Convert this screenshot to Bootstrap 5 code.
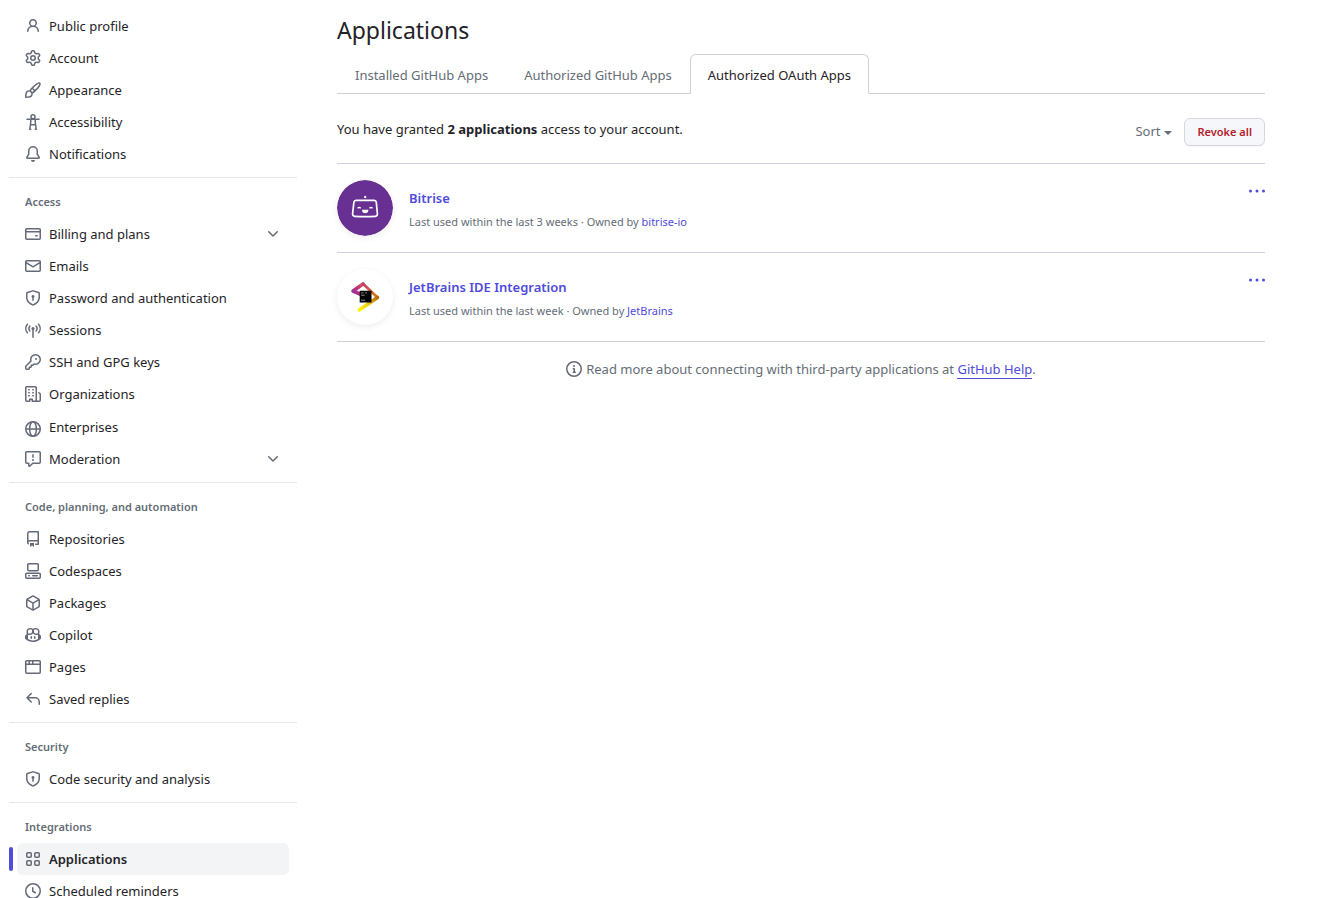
<!DOCTYPE html>
<html lang="en">
<head>
<meta charset="utf-8">
<meta name="viewport" content="width=device-width, initial-scale=1">
<title>Applications</title>
<link href="https://cdn.jsdelivr.net/npm/bootstrap@5.3.0/dist/css/bootstrap.min.css" rel="stylesheet">
<style>
  :root { --ink: #1f2328; --muted: #656d76; --line: #d0d1dc; --line-soft: #e6e7ee; --accent: #4f4bdb; }
  body { font-family: "Noto Sans", "Open Sans", sans-serif; font-size: 13px; line-height: 20px; color: var(--ink); background: #fff; overflow-x: hidden; }
  .settings { height: 100vh; overflow: hidden; }
  .sidebar { width: 288px; margin-left: 9px; padding-top: 10px; }
  .sidebar a { height: 32px; margin: 0 8px; padding: 0 8px; gap: 8px; border-radius: 6px; color: var(--ink); text-decoration: none; position: relative; }
  .sidebar a.tall { height: 33px; }
  .sidebar a:hover, .sidebar a.active { background: #f3f4f6; }
  .sidebar a.active { font-weight: 600; }
  .sidebar a.active::before { content: ""; position: absolute; left: -8px; top: 4px; width: 4px; height: 24px; border-radius: 6px; background: var(--accent); }
  .sidebar section { border-top: 1px solid var(--line-soft); margin-top: 7px; }
  .sidebar h2 { margin: 0; padding: 16px 16px 8px; font-size: 11px; line-height: 16px; font-weight: 600; color: var(--muted); }
  .oct { width: 16px; height: 16px; flex: none; fill: #656a78; }
  .oct.lined, .oct .lined { fill: none; stroke: #656a78; stroke-width: 1.5; stroke-linecap: round; stroke-linejoin: round; }
  main { min-width: 0; padding: 14px 55px 0 40px; }
  h1 { font-size: 23px; line-height: 32px; margin: 0 0 8px; font-weight: 400; }
  .nav-tabs { --bs-nav-tabs-border-color: var(--line); --bs-nav-tabs-link-active-border-color: var(--line) var(--line) #fff; --bs-nav-tabs-link-active-color: var(--ink); --bs-nav-link-color: var(--muted); }
  .nav-tabs .nav-link { padding: 10px 17px 8px; line-height: 20px; }
  .summary { padding: 24px 0 17px; line-height: 22px; border-bottom: 1px solid var(--line); }
  .sort-toggle { color: var(--muted); font-size: 13px; line-height: 20px; border: 0; background: none; padding: 0 0 2px; }
  .sort-toggle::after { content: ""; display: inline-block; vertical-align: middle; margin-left: 4px; border: 4px solid transparent; border-top-color: currentColor; border-bottom-width: 0; }
  .revoke { font-size: 11px; font-weight: 600; line-height: 18px; padding: 4px 12px; color: #b3202c; background: #f6f7fb; border: 1px solid #d5d7de; border-radius: 6px; box-shadow: 0 1px 0 rgba(31,35,40,.04); }
  .app { padding: 16px 0; border-bottom: 1px solid var(--line); gap: 16px; }
  .logo { width: 56px; height: 56px; border-radius: 50%; box-shadow: 0 2px 6px rgba(30,30,60,.08); }
  .app a, .help a { color: var(--accent); text-decoration: none; }
  .app-title { font-weight: 600; line-height: 20px; margin-top: 8px; }
  .owner { font-size: 11px; line-height: 18px; margin: 5px 0 0; color: var(--muted); }
  .more { border: 0; background: none; padding: 3px 0; line-height: 0; align-self: flex-start; }
  .more svg { fill: var(--accent); }
  .help { color: var(--muted); padding-top: 17px; gap: 4px; }
  .help a { border-bottom: 1px solid var(--accent); }
</style>
</head>
<body>
<div class="settings d-flex">
  <nav class="sidebar flex-shrink-0" aria-label="Settings">
    <a href="#" class="d-flex align-items-center"><svg class="oct" viewBox="0 0 16 16"><path d="M10.561 8.073a6.005 6.005 0 0 1 3.432 5.142.75.75 0 1 1-1.498.07 4.5 4.5 0 0 0-8.99 0 .75.75 0 0 1-1.498-.07 6.004 6.004 0 0 1 3.431-5.142 3.999 3.999 0 1 1 5.123 0ZM10.5 5a2.5 2.5 0 1 0-5 0 2.5 2.5 0 0 0 5 0Z"/></svg>Public profile</a>
    <a href="#" class="d-flex align-items-center"><svg class="oct" viewBox="0 0 16 16"><path d="M8 0a8.2 8.2 0 0 1 .701.031C9.444.095 9.99.645 10.16 1.29l.288 1.107c.018.066.079.158.212.224.231.114.454.243.668.386.123.082.233.09.299.071l1.103-.303c.644-.176 1.392.021 1.82.63.27.385.506.792.704 1.218.315.675.111 1.422-.364 1.891l-.814.806c-.049.048-.098.147-.088.294.016.257.016.515 0 .772-.01.147.038.246.088.294l.814.806c.475.469.679 1.216.364 1.891a7.977 7.977 0 0 1-.704 1.217c-.428.61-1.176.807-1.82.63l-1.102-.302c-.067-.019-.177-.011-.3.071a5.909 5.909 0 0 1-.668.386c-.133.066-.194.158-.211.224l-.29 1.106c-.168.646-.715 1.196-1.458 1.26a8.006 8.006 0 0 1-1.402 0c-.743-.064-1.289-.614-1.458-1.26l-.289-1.106c-.018-.066-.079-.158-.212-.224a5.738 5.738 0 0 1-.668-.386c-.123-.082-.233-.09-.299-.071l-1.103.303c-.644.176-1.392-.021-1.82-.63a8.12 8.12 0 0 1-.704-1.218c-.315-.675-.111-1.422.363-1.891l.815-.806c.05-.048.098-.147.088-.294a6.214 6.214 0 0 1 0-.772c.01-.147-.038-.246-.088-.294l-.815-.806C.635 6.045.431 5.298.746 4.623a7.92 7.92 0 0 1 .704-1.217c.428-.61 1.176-.807 1.82-.63l1.102.302c.067.019.177.011.3-.071.214-.143.437-.272.668-.386.133-.066.194-.158.211-.224l.29-1.106C6.009.645 6.556.095 7.299.03 7.53.01 7.764 0 8 0Zm-.571 1.525c-.036.003-.108.036-.137.146l-.289 1.105c-.147.561-.549.967-.998 1.189-.173.086-.34.183-.5.29-.417.278-.97.423-1.529.27l-1.103-.303c-.109-.03-.175.016-.195.045-.22.312-.412.644-.573.99-.014.031-.021.11.059.19l.815.806c.411.406.562.957.53 1.456a4.709 4.709 0 0 0 0 .582c.032.499-.119 1.05-.53 1.456l-.815.806c-.081.08-.073.159-.059.19.162.346.353.677.573.989.02.03.085.076.195.046l1.102-.303c.56-.153 1.113-.008 1.53.27.161.107.328.204.501.29.447.222.85.629.997 1.189l.289 1.105c.029.109.101.143.137.146a6.6 6.6 0 0 0 1.142 0c.036-.003.108-.036.137-.146l.289-1.105c.147-.561.549-.967.998-1.189.173-.086.34-.183.5-.29.417-.278.97-.423 1.529-.27l1.103.303c.109.029.175-.016.195-.045.22-.313.411-.644.573-.99.014-.031.021-.11-.059-.19l-.815-.806c-.411-.406-.562-.957-.53-1.456a4.709 4.709 0 0 0 0-.582c-.032-.499.119-1.05.53-1.456l.815-.806c.081-.08.073-.159.059-.19a6.464 6.464 0 0 0-.573-.989c-.02-.03-.085-.076-.195-.046l-1.102.303c-.56.153-1.113.008-1.53-.27a4.44 4.44 0 0 0-.501-.29c-.447-.222-.85-.629-.997-1.189l-.289-1.105c-.029-.11-.101-.143-.137-.146a6.6 6.6 0 0 0-1.142 0ZM11 8a3 3 0 1 1-6 0 3 3 0 0 1 6 0ZM9.5 8a1.5 1.5 0 1 0-3.001.001A1.5 1.5 0 0 0 9.5 8Z"/></svg>Account</a>
    <a href="#" class="d-flex align-items-center"><svg class="oct" viewBox="0 0 16 16"><path d="M11.134 1.535c.7-.509 1.416-.942 2.076-1.155.649-.21 1.463-.267 2.069.34.603.601.568 1.411.368 2.07-.202.668-.624 1.39-1.125 2.096-1.011 1.424-2.496 2.987-3.775 4.249-1.098 1.084-2.132 1.839-3.04 2.3a3.744 3.744 0 0 1-1.055 3.217c-.431.431-1.065.691-1.657.861-.614.177-1.294.287-1.914.357A21.151 21.151 0 0 1 .797 16H.743l.007-.75H.749L.742 16a.75.75 0 0 1-.743-.742l.743-.008-.742.007v-.054a21.25 21.25 0 0 1 .13-2.284c.067-.647.187-1.287.358-1.914.17-.591.43-1.226.86-1.657a3.746 3.746 0 0 1 3.227-1.054c.466-.893 1.225-1.907 2.314-2.982 1.271-1.255 2.833-2.75 4.245-3.777ZM1.62 13.089c-.051.464-.086.929-.104 1.395.466-.018.932-.053 1.396-.104a10.511 10.511 0 0 0 1.668-.309c.526-.151.856-.325 1.011-.48a2.25 2.25 0 1 0-3.182-3.182c-.155.155-.329.485-.48 1.01a10.515 10.515 0 0 0-.309 1.67Zm10.396-10.34c-1.224.89-2.605 2.189-3.822 3.384l1.718 1.718c1.21-1.205 2.51-2.597 3.387-3.833.47-.662.78-1.227.912-1.662.134-.444.032-.551.009-.575h-.001V1.78c-.014-.014-.113-.113-.548.027-.432.14-.995.462-1.655.942Zm-4.832 7.266-.001.001a9.859 9.859 0 0 0 1.63-1.142L7.155 7.216a9.7 9.7 0 0 0-1.161 1.607c.482.302.889.71 1.19 1.192Z"/></svg>Appearance</a>
    <a href="#" class="d-flex align-items-center"><svg class="oct lined" viewBox="0 0 16 16"><circle cx="8" cy="2.75" r="2"/><path d="M2 5.25h12M5.75 5.5v3L4.75 15.25M10.25 5.5v3l1 6.75M6 10.75h4M4.75 15.25h1M10.25 15.25h1"/></svg>Accessibility</a>
    <a href="#" class="d-flex align-items-center"><svg class="oct" viewBox="0 0 16 16"><path d="M8 16a2 2 0 0 0 1.985-1.75c.017-.137-.097-.25-.235-.25h-3.5c-.138 0-.252.113-.235.25A2 2 0 0 0 8 16ZM3 5a5 5 0 0 1 10 0v2.947c0 .05.015.098.042.139l1.703 2.555A1.519 1.519 0 0 1 13.482 13H2.518a1.516 1.516 0 0 1-1.263-2.36l1.703-2.554A.255.255 0 0 0 3 7.947Zm5-3.5A3.5 3.5 0 0 0 4.5 5v2.947c0 .346-.102.683-.294.97l-1.703 2.556a.017.017 0 0 0-.003.01l.001.006c0 .002.002.004.004.006l.006.004.007.001h10.964l.007-.001.006-.004.004-.006.001-.007a.017.017 0 0 0-.003-.01l-1.703-2.554a1.745 1.745 0 0 1-.294-.97V5A3.5 3.5 0 0 0 8 1.5Z"/></svg>Notifications</a>

    <section>
      <h2>Access</h2>
      <a href="#" class="d-flex align-items-center"><svg class="oct" viewBox="0 0 16 16"><path d="M10.75 9a.75.75 0 0 0 0 1.5h1.5a.75.75 0 0 0 0-1.5h-1.5Z"/><path d="M0 3.75C0 2.784.784 2 1.75 2h12.5c.966 0 1.75.784 1.75 1.75v8.5A1.75 1.75 0 0 1 14.25 14H1.75A1.75 1.75 0 0 1 0 12.25ZM14.5 6.5h-13v5.75c0 .138.112.25.25.25h12.5a.25.25 0 0 0 .25-.25Zm0-2.75a.25.25 0 0 0-.25-.25H1.75a.25.25 0 0 0-.25.25V5h13Z"/></svg>Billing and plans<svg class="oct ms-auto" viewBox="0 0 16 16"><path id="chevron" d="M12.78 5.22a.749.749 0 0 1 0 1.06l-4.25 4.25a.749.749 0 0 1-1.06 0L3.22 6.28a.749.749 0 1 1 1.06-1.06L8 8.939l3.72-3.719a.749.749 0 0 1 1.06 0Z"/></svg></a>
      <a href="#" class="d-flex align-items-center"><svg class="oct" viewBox="0 0 16 16"><path d="M1.75 2h12.5c.966 0 1.75.784 1.75 1.75v8.5A1.75 1.75 0 0 1 14.25 14H1.75A1.75 1.75 0 0 1 0 12.25v-8.5C0 2.784.784 2 1.75 2ZM1.5 12.251c0 .138.112.25.25.25h12.5a.25.25 0 0 0 .25-.25V5.809L8.38 9.397a.75.75 0 0 1-.76 0L1.5 5.809v6.442Zm13-8.181v-.32a.25.25 0 0 0-.25-.25H1.75a.25.25 0 0 0-.25.25v.32L8 7.88Z"/></svg>Emails</a>
      <a href="#" class="d-flex align-items-center"><svg class="oct" viewBox="0 0 16 16"><path id="shield" d="m8.533.133 5.25 1.68A1.75 1.75 0 0 1 15 3.48V7c0 1.566-.32 3.182-1.303 4.682-.983 1.498-2.585 2.813-5.032 3.855a1.697 1.697 0 0 1-1.33 0c-2.447-1.042-4.049-2.357-5.032-3.855C1.32 10.182 1 8.566 1 7V3.48a1.755 1.755 0 0 1 1.217-1.667l5.25-1.68a1.748 1.748 0 0 1 1.066 0Zm-.61 1.429.001.001-5.25 1.68a.251.251 0 0 0-.174.237V7c0 1.36.275 2.666 1.057 3.859.784 1.194 2.121 2.342 4.366 3.298a.196.196 0 0 0 .154 0c2.245-.957 3.582-2.103 4.366-3.297C13.225 9.666 13.5 8.358 13.5 7V3.48a.25.25 0 0 0-.174-.238l-5.25-1.68a.25.25 0 0 0-.153 0ZM9.5 6.5c0 .536-.286 1.032-.75 1.3v2.45a.75.75 0 0 1-1.5 0V7.8A1.5 1.5 0 1 1 9.5 6.5Z"/></svg>Password and authentication</a>
      <a href="#" class="d-flex align-items-center"><svg class="oct" viewBox="0 0 16 16"><path class="lined" d="M2.4 2.2a6.7 6.7 0 0 0 0 8.6M13.6 2.2a6.7 6.7 0 0 1 0 8.6M4.9 4.1a3.7 3.7 0 0 0 0 4.8M11.1 4.1a3.7 3.7 0 0 1 0 4.8M8 7v8.2"/><circle cx="8" cy="6.5" r="1.6"/></svg>Sessions</a>
      <a href="#" class="d-flex align-items-center"><svg class="oct" viewBox="0 0 16 16"><path d="M10.5 0a5.499 5.499 0 1 1-1.288 10.848l-.932.932a.749.749 0 0 1-.53.22H7v.75a.749.749 0 0 1-.22.53l-.5.5a.749.749 0 0 1-.53.22H5v.75a.749.749 0 0 1-.22.53l-.5.5a.749.749 0 0 1-.53.22h-2A1.75 1.75 0 0 1 0 14.25v-2c0-.199.079-.389.22-.53l4.932-4.932A5.5 5.5 0 0 1 10.5 0Zm-4 5.5c-.001.431.069.86.205 1.269a.75.75 0 0 1-.181.768L1.5 12.56v1.69c0 .138.112.25.25.25h1.69l.06-.06v-1.19a.75.75 0 0 1 .75-.75h1.19l.06-.06v-1.19a.75.75 0 0 1 .75-.75h1.19l1.023-1.025a.75.75 0 0 1 .768-.18A4 4 0 1 0 6.5 5.5ZM11 6a1 1 0 1 1 0-2 1 1 0 0 1 0 2Z"/></svg>SSH and GPG keys</a>
      <a href="#" class="d-flex align-items-center"><svg class="oct" viewBox="0 0 16 16"><path d="M1.75 16A1.75 1.75 0 0 1 0 14.25V1.75C0 .784.784 0 1.75 0h8.5C11.216 0 12 .784 12 1.75v12.5c0 .085-.006.168-.018.25h2.268a.25.25 0 0 0 .25-.25V8.285a.25.25 0 0 0-.111-.208l-1.055-.703a.749.749 0 1 1 .832-1.248l1.055.703c.487.325.779.871.779 1.456v5.965A1.75 1.75 0 0 1 14.25 16h-3.5a.766.766 0 0 1-.197-.026c-.099.017-.2.026-.303.026h-3a.75.75 0 0 1-.75-.75V14h-1v1.25a.75.75 0 0 1-.75.75Zm-.25-1.75c0 .138.112.25.25.25H4v-1.25a.75.75 0 0 1 .75-.75h2.5a.75.75 0 0 1 .75.75v1.25h2.25a.25.25 0 0 0 .25-.25V1.75a.25.25 0 0 0-.25-.25h-8.5a.25.25 0 0 0-.25.25ZM3.75 6h.5a.75.75 0 0 1 0 1.5h-.5a.75.75 0 0 1 0-1.5ZM3 3.75A.75.75 0 0 1 3.75 3h.5a.75.75 0 0 1 0 1.5h-.5A.75.75 0 0 1 3 3.75Zm4 3A.75.75 0 0 1 7.75 6h.5a.75.75 0 0 1 0 1.5h-.5A.75.75 0 0 1 7 6.75ZM7.75 3h.5a.75.75 0 0 1 0 1.5h-.5a.75.75 0 0 1 0-1.5ZM3 9.75A.75.75 0 0 1 3.75 9h.5a.75.75 0 0 1 0 1.5h-.5A.75.75 0 0 1 3 9.75ZM7.75 9h.5a.75.75 0 0 1 0 1.5h-.5a.75.75 0 0 1 0-1.5Z"/></svg>Organizations</a>
      <a href="#" class="d-flex align-items-center tall"><svg class="oct lined mt-1" viewBox="0 0 16 16"><circle cx="8" cy="8" r="7.25"/><ellipse cx="8" cy="8" rx="3.4" ry="7.25"/><path d="M1 8h14"/></svg>Enterprises</a>
      <a href="#" class="d-flex align-items-center"><svg class="oct" viewBox="0 0 16 16"><path d="M0 1.75C0 .784.784 0 1.75 0h12.5C15.216 0 16 .784 16 1.75v9.5A1.75 1.75 0 0 1 14.25 13H8.06l-2.573 2.573A1.458 1.458 0 0 1 3 14.543V13H1.75A1.75 1.75 0 0 1 0 11.25Zm1.75-.25a.25.25 0 0 0-.25.25v9.5c0 .138.112.25.25.25h2a.75.75 0 0 1 .75.75v2.19l2.72-2.72a.749.749 0 0 1 .53-.22h6.5a.25.25 0 0 0 .25-.25v-9.5a.25.25 0 0 0-.25-.25Zm7 2.25v2.5a.75.75 0 0 1-1.5 0v-2.5a.75.75 0 0 1 1.5 0ZM9 9a1 1 0 1 1-2 0 1 1 0 0 1 2 0Z"/></svg>Moderation<svg class="oct ms-auto" viewBox="0 0 16 16"><use href="#chevron"/></svg></a>
    </section>

    <section>
      <h2>Code, planning, and automation</h2>
      <a href="#" class="d-flex align-items-center"><svg class="oct" viewBox="0 0 16 16"><path d="M2 2.5A2.5 2.5 0 0 1 4.5 0h8.75a.75.75 0 0 1 .75.75v12.5a.75.75 0 0 1-.75.75h-2.5a.75.75 0 0 1 0-1.5h1.75v-2h-8a1 1 0 0 0-.714 1.7.75.75 0 1 1-1.072 1.05A2.495 2.495 0 0 1 2 11.5Zm10.5-1h-8a1 1 0 0 0-1 1v6.708A2.486 2.486 0 0 1 4.5 9h8ZM5 12.25a.25.25 0 0 1 .25-.25h3.5a.25.25 0 0 1 .25.25v3.25a.25.25 0 0 1-.4.2l-1.45-1.087a.249.249 0 0 0-.3 0L5.4 15.7a.25.25 0 0 1-.4-.2Z"/></svg>Repositories</a>
      <a href="#" class="d-flex align-items-center"><svg class="oct" viewBox="0 0 16 16"><path d="M0 11.25c0-.966.784-1.75 1.75-1.75h12.5c.966 0 1.75.784 1.75 1.75v3A1.75 1.75 0 0 1 14.25 16H1.75A1.75 1.75 0 0 1 0 14.25Zm2-9.5C2 .784 2.784 0 3.75 0h8.5C13.216 0 14 .784 14 1.75v5a1.75 1.75 0 0 1-1.75 1.75h-8.5A1.75 1.75 0 0 1 2 6.75Zm1.75-.25a.25.25 0 0 0-.25.25v5c0 .138.112.25.25.25h8.5a.25.25 0 0 0 .25-.25v-5a.25.25 0 0 0-.25-.25Zm-2 9.5a.25.25 0 0 0-.25.25v3c0 .138.112.25.25.25h12.5a.25.25 0 0 0 .25-.25v-3a.25.25 0 0 0-.25-.25ZM7 12.75a.75.75 0 0 1 .75-.75h4.5a.75.75 0 0 1 0 1.5h-4.5a.75.75 0 0 1-.75-.75Zm-4 0a.75.75 0 0 1 .75-.75h.5a.75.75 0 0 1 0 1.5h-.5a.75.75 0 0 1-.75-.75Z"/></svg>Codespaces</a>
      <a href="#" class="d-flex align-items-center"><svg class="oct" viewBox="0 0 16 16"><path d="m8.878.392 5.25 3.045c.54.314.872.89.872 1.514v6.098a1.75 1.75 0 0 1-.872 1.514l-5.25 3.045a1.75 1.75 0 0 1-1.756 0l-5.25-3.045A1.75 1.75 0 0 1 1 11.049V4.951c0-.624.332-1.201.872-1.514L7.122.392a1.75 1.75 0 0 1 1.756 0ZM7.875 1.69l-4.63 2.685L8 7.133l4.755-2.758-4.63-2.685a.248.248 0 0 0-.25 0ZM2.5 5.677v5.372c0 .09.047.171.125.216l4.625 2.683V8.432Zm6.25 8.271 4.625-2.683a.25.25 0 0 0 .125-.216V5.677L8.75 8.432Z"/></svg>Packages</a>
      <a href="#" class="d-flex align-items-center"><svg class="oct" viewBox="0 0 16 16"><path d="M7.998 15.035c-4.562 0-7.873-2.914-7.998-3.749V9.338c.085-.628.677-1.686 1.588-2.065.013-.07.024-.143.036-.218.029-.183.06-.384.126-.612-.201-.508-.254-1.084-.254-1.656 0-.87.128-1.769.693-2.484.579-.733 1.494-1.124 2.724-1.261 1.206-.134 2.262.034 2.944.765.05.053.096.108.139.165.044-.057.094-.112.143-.165.682-.731 1.738-.899 2.944-.765 1.23.137 2.145.528 2.724 1.261.566.715.693 1.614.693 2.484 0 .572-.053 1.148-.254 1.656.066.228.098.429.126.612.012.076.024.148.037.218.924.385 1.522 1.471 1.591 2.095v1.872c0 .766-3.351 3.795-8.002 3.795Zm0-1.485c2.28 0 4.584-1.11 5.002-1.433V7.862l-.023-.116c-.49.21-1.075.291-1.727.291-1.146 0-2.059-.327-2.71-.991A3.222 3.222 0 0 1 8 6.303a3.24 3.24 0 0 1-.544.743c-.65.664-1.563.991-2.71.991-.652 0-1.236-.081-1.727-.291l-.023.116v4.255c.419.323 2.722 1.433 5.002 1.433ZM6.762 2.83c-.193-.206-.637-.413-1.682-.297-1.019.113-1.479.404-1.713.7-.247.312-.369.789-.369 1.554 0 .793.129 1.171.308 1.371.162.181.519.379 1.442.379.853 0 1.339-.235 1.638-.54.315-.322.527-.827.617-1.553.117-.935-.037-1.395-.241-1.614Zm4.155-.297c-1.044-.116-1.488.091-1.681.297-.204.219-.359.679-.242 1.614.091.726.303 1.231.618 1.553.299.305.784.54 1.638.54.922 0 1.28-.198 1.442-.379.179-.2.308-.578.308-1.371 0-.765-.123-1.242-.37-1.554-.233-.296-.693-.587-1.713-.7ZM6.25 9.037a.75.75 0 0 1 .75.75v1.501a.75.75 0 0 1-1.5 0V9.787a.75.75 0 0 1 .75-.75Zm4.25.75v1.501a.75.75 0 0 1-1.5 0V9.787a.75.75 0 0 1 1.5 0Z"/></svg>Copilot</a>
      <a href="#" class="d-flex align-items-center"><svg class="oct" viewBox="0 0 16 16"><path d="M0 2.75C0 1.784.784 1 1.75 1h12.5c.966 0 1.75.784 1.75 1.75v10.5A1.75 1.75 0 0 1 14.25 15H1.75A1.75 1.75 0 0 1 0 13.25ZM14.5 6h-13v7.25c0 .138.112.25.25.25h12.5a.25.25 0 0 0 .25-.25Zm-6-3.5v2h6V2.75a.25.25 0 0 0-.25-.25ZM5 2.5v2h2v-2Zm-3.25 0a.25.25 0 0 0-.25.25V4.5h2v-2Z"/></svg>Pages</a>
      <a href="#" class="d-flex align-items-center"><svg class="oct" viewBox="0 0 16 16"><path d="M6.78 1.97a.75.75 0 0 1 0 1.06L3.81 6h6.44A4.75 4.75 0 0 1 15 10.75v2.5a.75.75 0 0 1-1.5 0v-2.5a3.25 3.25 0 0 0-3.25-3.25H3.81l2.97 2.97a.749.749 0 0 1-.326 1.275.749.749 0 0 1-.734-.215L1.47 7.28a.75.75 0 0 1 0-1.06l4.25-4.25a.75.75 0 0 1 1.06 0Z"/></svg>Saved replies</a>
    </section>

    <section>
      <h2>Security</h2>
      <a href="#" class="d-flex align-items-center"><svg class="oct" viewBox="0 0 16 16"><use href="#shield"/></svg>Code security and analysis</a>
    </section>

    <section>
      <h2>Integrations</h2>
      <a href="#" class="d-flex align-items-center active" aria-current="page"><svg class="oct lined" viewBox="0 0 16 16"><rect x="1.75" y="1.75" width="4.5" height="4.5" rx="1"/><rect x="9.75" y="1.75" width="4.5" height="4.5" rx="1"/><rect x="1.75" y="9.75" width="4.5" height="4.5" rx="1"/><rect x="9.75" y="9.75" width="4.5" height="4.5" rx="1"/></svg>Applications</a>
      <a href="#" class="d-flex align-items-center"><svg class="oct lined" viewBox="0 0 16 16"><circle cx="8" cy="8" r="7.25"/><path d="M7.75 4.75v3.5l2.5 1.5"/></svg>Scheduled reminders</a>
    </section>
  </nav>

  <main class="flex-grow-1">
    <h1>Applications</h1>
    <ul class="nav nav-tabs">
      <li class="nav-item"><a class="nav-link" href="#">Installed GitHub Apps</a></li>
      <li class="nav-item"><a class="nav-link" href="#">Authorized GitHub Apps</a></li>
      <li class="nav-item"><a class="nav-link active" aria-current="page" href="#">Authorized OAuth Apps</a></li>
    </ul>

    <div class="summary d-flex align-items-start">
      <span>You have granted <strong>2 applications</strong> access to your account.</span>
      <div class="ms-auto d-flex align-items-center gap-2">
        <button type="button" class="sort-toggle me-1">Sort</button>
        <button type="button" class="revoke">Revoke all</button>
      </div>
    </div>

    <article class="app d-flex">
      <svg class="logo flex-shrink-0" viewBox="0 0 56 56"><circle cx="28" cy="28" r="28" fill="#683093"/><g fill="none" stroke="#fff" stroke-width="1.7" stroke-linecap="round" stroke-linejoin="round"><path d="M19 20.3h18.2q1.8 0 2.1 1.8l1.1 11.8q.1 2.2-2 2.4-10.3.8-20.8 0-2.1-.2-2-2.4L16.900 22.100q.3-1.800 2.100-1.800Z"/><path d="M21 27.900q1.200-.8 2.400 0M32.800 27.900q1.200-.8 2.400 0" stroke-width="1.300"/></g><circle cx="28.200" cy="17" r="1.200" fill="#fff"/><path d="M25 29.700h6.400q-.2 3.500-3.200 3.500t-3.200-3.500Z" fill="#fff"/></svg>
      <div class="flex-grow-1">
        <div class="app-title"><a href="#">Bitrise</a></div>
        <p class="owner">Last used within the last 3 weeks · Owned by <a href="#">bitrise-io</a></p>
      </div>
      <button type="button" class="more" aria-label="More options"><svg width="16" height="16" viewBox="0 0 16 16"><circle cx="1.500" cy="8" r="1.500"/><circle cx="8" cy="8" r="1.500"/><circle cx="14.500" cy="8" r="1.500"/></svg></button>
    </article>

    <article class="app d-flex">
      <svg class="logo flex-shrink-0" viewBox="0 0 56 56">
        <defs>
          <linearGradient id="jbTop" x1="0" y1="1" x2="1" y2="0"><stop offset="0" stop-color="#9135a0"/><stop offset=".5" stop-color="#c0307c"/><stop offset="1" stop-color="#cf6152"/></linearGradient>
          <linearGradient id="jbRight" x1="0" y1="0" x2="1" y2="1"><stop offset="0" stop-color="#c43c72"/><stop offset="1" stop-color="#d98400"/></linearGradient>
          <linearGradient id="jbLow" x1="1" y1="0" x2="0" y2="1"><stop offset="0" stop-color="#b9690c"/><stop offset=".6" stop-color="#efd510"/><stop offset="1" stop-color="#fdf40c"/></linearGradient>
        </defs>
        <g fill="none" stroke-linecap="round" stroke-linejoin="round">
          <path d="M26 15 16 22l8 3.500" stroke="url(#jbTop)" stroke-width="3.600"/>
          <path d="M26 14.800 40.500 28.500" stroke="url(#jbRight)" stroke-width="2.800"/>
          <path d="M40.500 28.500 22.300 41" stroke="url(#jbLow)" stroke-width="3.600"/>
        </g>
        <path d="M22.700 21.700H34.500V33.500H22.700Z"/>
        <path d="M24.200 23.900h2.400M28.200 23.900h2M24.200 26.200h3.600M24 31.200h4" stroke="#fff" stroke-width=".8" opacity=".7"/>
      </svg>
      <div class="flex-grow-1">
        <div class="app-title"><a href="#">JetBrains IDE Integration</a></div>
        <p class="owner">Last used within the last week · Owned by <a href="#">JetBrains</a></p>
      </div>
      <button type="button" class="more" aria-label="More options"><svg width="16" height="16" viewBox="0 0 16 16"><circle cx="1.500" cy="8" r="1.500"/><circle cx="8" cy="8" r="1.500"/><circle cx="14.500" cy="8" r="1.500"/></svg></button>
    </article>

    <div class="help d-flex justify-content-center align-items-center">
      <svg class="oct" viewBox="0 0 16 16"><path d="M0 8a8 8 0 1 1 16 0A8 8 0 0 1 0 8Zm8-6.500a6.500 6.500 0 1 0 0 13 6.500 6.500 0 0 0 0-13ZM6.500 7.750A.75.75 0 0 1 7.250 7h1a.75.75 0 0 1 .75.75v2.750h.25a.75.75 0 0 1 0 1.500h-2a.75.75 0 0 1 0-1.500h.25v-2h-.25a.75.75 0 0 1-.75-.75ZM8 6a1 1 0 1 1 0-2 1 1 0 0 1 0 2Z"/></svg>
      <span>Read more about connecting with third-party applications at <a href="#">GitHub Help</a>.</span>
    </div>
  </main>
</div>
<script src="https://cdn.jsdelivr.net/npm/bootstrap@5.3.0/dist/js/bootstrap.bundle.min.js"></script>
</body>
</html>
